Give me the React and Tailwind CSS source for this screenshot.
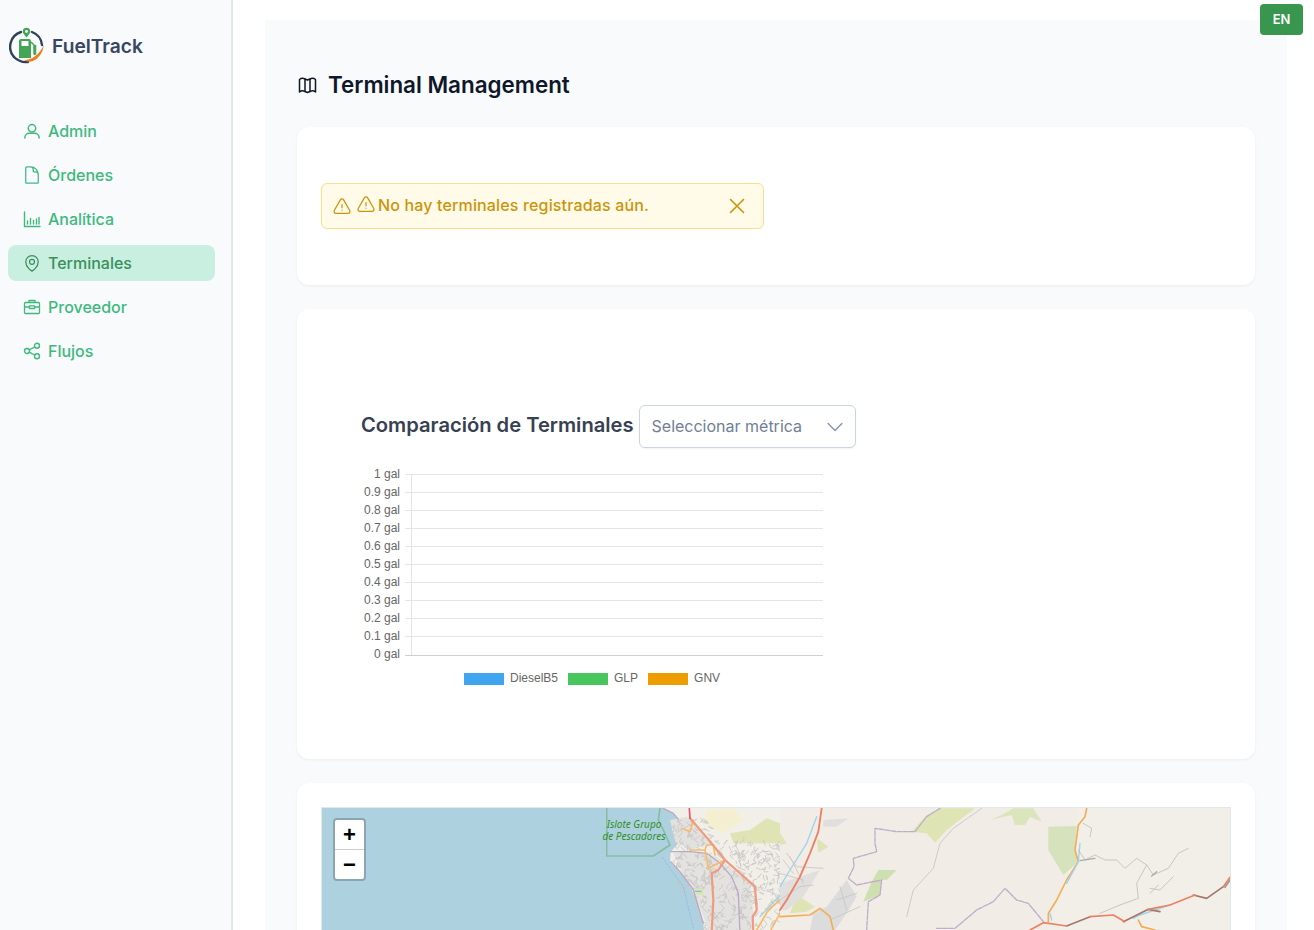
import React from 'react';
import {
  HiOutlineDocument,
  HiOutlineMapPin,
  HiOutlineExclamationTriangle,
  HiOutlineXMark,
  HiOutlineChevronDown,
} from 'react-icons/hi2';

const NAV_ITEMS = [
  { label: 'Admin', icon: UserIcon, size: 'w-[18px] h-[18px]' },
  { label: 'Órdenes', icon: HiOutlineDocument, size: 'w-[20px] h-[20px] -mx-px' },
  { label: 'Analítica', icon: ChartIcon, size: 'w-[18px] h-[18px]' },
  { label: 'Terminales', icon: HiOutlineMapPin, size: 'w-[20px] h-[20px] -mx-px', active: true },
  { label: 'Proveedor', icon: BriefcaseIcon, size: 'w-[18px] h-[18px]' },
  { label: 'Flujos', icon: ShareIcon, size: 'w-[18px] h-[18px]' },
];

const Y_TICKS = ['1', '0.9', '0.8', '0.7', '0.6', '0.5', '0.4', '0.3', '0.2', '0.1', '0'];

const LEGEND = [
  { label: 'DieselB5', color: 'bg-[#3ea5ee]' },
  { label: 'GLP', color: 'bg-[#46c65c]' },
  { label: 'GNV', color: 'bg-[#ee9d00]' },
];

// Zonas urbanas del mapa, en coordenadas del recorte a 3x: x, y, ancho, alto, segmentos.
const URBAN_AREAS = [
  [1060, 60, 110, 90, 50],
  [1060, 160, 120, 110, 70],
  [1130, 230, 170, 170, 110],
  [1190, 130, 190, 100, 90],
  [1300, 240, 80, 160, 50],
  [1380, 180, 70, 200, 80],
  [1480, 320, 100, 80, 40],
];

function urbanWeb() {
  let seed = 17;
  const next = () => {
    seed = (seed * 16807) % 2147483647;
    return seed / 2147483647;
  };
  let d = '';
  URBAN_AREAS.forEach(([x, y, w, h, count]) => {
    for (let i = 0; i < count; i++) {
      const a = x + next() * w;
      const b = y + next() * h;
      d += `M${a.toFixed(0)} ${b.toFixed(0)}l${(next() * 30 - 15).toFixed(0)} ${(next() * 30 - 15).toFixed(0)}l${(next() * 24 - 12).toFixed(0)} ${(next() * 24 - 12).toFixed(0)}`;
    }
  });
  return d;
}

const URBAN_WEB = urbanWeb();

export default function App() {
  return (
    <div className="relative flex h-screen overflow-hidden bg-white font-['Inter',sans-serif]">
      <Sidebar />
      <main className="flex-1 min-w-0 pl-8 pr-[27px] pt-5">
        <div className="bg-[#f8fafc] px-8 pt-[49px] h-[1200px]">
          <h1 className="flex items-center gap-[10px] text-[22.4px] leading-[32px] font-semibold text-[#0f172a]">
            <MapIcon />
            Terminal Management
          </h1>
          <AlertCard />
          <ChartCard />
          <MapCard />
        </div>
      </main>
      <button className="absolute top-[4px] right-[11px] w-[43px] h-[31px] rounded-[4px] bg-[#38964f] text-white text-[13px] font-semibold">
        EN
      </button>
    </div>
  );
}

function Sidebar() {
  return (
    <aside className="w-[233px] shrink-0 bg-[#f9fafc] border-r-2 border-[#e2e8f0]">
      <div className="flex gap-[6px] pl-[9px] pt-[27px] h-[113px] items-start">
        <Logo />
        <span className="mt-[5px] text-[19.2px] leading-[28px] font-semibold text-[#374763]">FuelTrack</span>
      </div>
      <nav className="flex flex-col gap-2 px-2 w-[223px]">
        {NAV_ITEMS.map((item) => (
          <a
            key={item.label}
            href="#"
            className={`flex items-center gap-[7px] h-[36px] pl-[15px] rounded-[8px] text-[16px] font-medium ${
              item.active ? 'bg-[#c9efe0] text-[#3a8f5c]' : 'text-[#3eb97f]'
            }`}
          >
            <item.icon className={`${item.size} shrink-0`} />
            {item.label}
          </a>
        ))}
      </nav>
    </aside>
  );
}

function AlertCard() {
  return (
    <section className="mt-[26px] h-[158px] rounded-[12px] bg-white px-6 pt-[56px] shadow-[0_1px_3px_rgba(0,0,0,0.06)]">
      <div className="flex items-center w-[443px] h-[46px] pl-[10px] pr-[13px] rounded-[6px] border border-[#f8e08a] bg-[#fffbe8] text-[#cc9409]">
        <HiOutlineExclamationTriangle className="w-[20px] h-[20px] mt-[1px] shrink-0" />
        <HiOutlineExclamationTriangle className="w-[20px] h-[20px] ml-[4px] -mt-[3px] shrink-0" />
        <span className="ml-[2px] -mt-[2px] text-[16px] font-medium tracking-[0.15px]">No hay terminales registradas aún.</span>
        <HiOutlineXMark className="ml-auto w-[26px] h-[26px] shrink-0" />
      </div>
    </section>
  );
}

function ChartCard() {
  return (
    <section className="mt-[24px] h-[450px] rounded-[12px] bg-white pl-[64px] pt-[96px] shadow-[0_1px_3px_rgba(0,0,0,0.06)]">
      <div className="flex items-center h-[43px]">
        <h2 className="text-[20.15px] font-semibold text-[#374151] leading-[28px] -mt-[3px]">Comparación de Terminales</h2>
        <div className="ml-[5px] flex items-center justify-between w-[217px] h-[43px] pl-[12px] pr-[9px] rounded-[6px] border border-[#cbd5e0] bg-white shadow-[0_1px_2px_rgba(0,0,0,0.05)] text-[16px] text-[#718096]">
          <span className="-mt-[2px]">Seleccionar métrica</span>
          <HiOutlineChevronDown className="w-[22px] h-[22px] text-[#8795a8]" />
        </div>
      </div>
      <EmptyChart />
    </section>
  );
}

function EmptyChart() {
  return (
    <svg width="480" height="240" viewBox="361 460 480 240" className="block mt-[12px] font-['Liberation_Sans',sans-serif]">
      {Y_TICKS.map((tick, i) => {
        const y = 474.5 + i * 18;
        return (
          <g key={tick}>
            <line x1="405" x2="823" y1={y + (i === 10 ? 1 : 0)} y2={y + (i === 10 ? 1 : 0)} stroke={i === 10 ? '#cfcfcf' : '#e5e5e5'} />
            <text x="400" y={y + 3} textAnchor="end" fontSize="12" fill="#666">
              {tick} gal
            </text>
          </g>
        );
      })}
      <line x1="411.5" x2="411.5" y1="474" y2="655" stroke="#e5e5e5" />
      <foreignObject x="361" y="672" width="480" height="20">
        <div className="flex items-center text-[12px] leading-[16px] text-[#666] pl-[103px]">
          {LEGEND.map((entry) => (
            <span key={entry.label} className="flex items-center gap-[6px] mr-[10px]">
              <span className={`w-[40px] h-[12px] ${entry.color}`} />
              <span className="-mt-[2px]">{entry.label}</span>
            </span>
          ))}
        </div>
      </foreignObject>
    </svg>
  );
}

function MapCard() {
  return (
    <section className="mt-[24px] h-[400px] rounded-[12px] bg-white p-6 shadow-[0_1px_3px_rgba(0,0,0,0.06)]">
      <div className="relative h-[350px] overflow-hidden bg-[#aed1e0] border border-[#e2e8f0]">
        <MapDrawing />
        <div className="absolute left-[11px] top-[10px] w-[33px] rounded-[4px] border-2 border-[#8ba6b2] bg-white overflow-hidden">
          <div className="h-[30px] flex items-center justify-center border-b border-[#ccc] text-[22px] font-bold leading-none text-black font-['Liberation_Sans',sans-serif]">+</div>
          <div className="h-[29px] flex items-center justify-center text-[22px] font-bold leading-none text-black font-['Liberation_Sans',sans-serif]">−</div>
        </div>
      </div>
    </section>
  );
}

// Coordenadas copiadas de los recortes a 3x, por eso los dos grupos escalados.
function MapDrawing() {
  return (
    <svg className="absolute inset-0 block" width="908" height="350" viewBox="322 808 908 350">
      <defs>
        <filter id="tile-blur" x="0" y="0" width="100%" height="100%">
          <feGaussianBlur stdDeviation="0.55" />
        </filter>
      </defs>
      <g filter="url(#tile-blur)">
        <g transform="translate(320 800) scale(0.33333)" fill="none" strokeLinejoin="round" strokeLinecap="round">
          <path fill="#f2efe9" d="M1030 25L1060 40L1075 58L1060 90L1075 130L1052 155L1050 185L1080 215L1120 270L1150 370L1160 480L1400 480L1400 0L1030 0Z" />
          <path fill="#f5efd2" d="M1160 30L1240 25L1270 60L1210 100L1150 70Z" />
          <path fill="#dfe4b4" d="M1230 100L1290 90L1340 55L1380 70L1380 130L1300 130L1240 130Z" />
          <path fill="#e4e2df" d="M1060 160L1110 150L1190 170L1290 250L1300 340L1290 400L1170 400L1130 300L1090 225Z" />
          <path fill="#e2e1df" d="M1050 60L1100 50L1170 130L1110 150L1065 125Z" />
          <path stroke="#c6c6c6" strokeWidth="2.5" d={URBAN_WEB} />
          <path stroke="#88bca0" strokeWidth="5" d="M860 25L860 168L1000 168L1050 135L1030 90L1015 60L1020 25" />
          <path stroke="#7fa9e0" strokeWidth="1.5" strokeDasharray="6 5" d="M1028 172L1050 205L1090 260L1120 385" />
          <path stroke="#b9a9c6" strokeWidth="4" d="M1030 25L1060 40L1075 58M1052 155L1110 155L1160 160L1200 190L1235 230L1255 280L1260 400M1052 185L1080 215L1120 270L1150 370" />
          <path stroke="#f7bb6d" strokeWidth="5" d="M1085 85L1110 95L1120 60M1110 150L1155 150L1160 135L1180 135L1185 165M1155 150L1165 205L1215 180M1380 300L1345 330L1310 390M1380 340L1350 395" />
          <path stroke="#9fd3ea" strokeWidth="4" d="M1380 285L1320 350" />
          <path stroke="#f09a7e" strokeWidth="6.500" d="M1110 55L1175 130L1215 180L1305 260L1310 330L1298 350L1300 400M1215 180L1195 210L1175 220L1180 300L1175 400" />
          <path stroke="#e8546a" strokeWidth="5" d="M1108 25L1110 55" />
          <path fill="#d7e6b5" d="M1125 265L1150 265L1150 285L1130 285Z" />
          <path stroke="#5aa4e6" strokeWidth="2.500" d="M1125 274L1143 274" />
        </g>
        <g transform="translate(780 800) scale(0.33333)" fill="none" strokeLinejoin="round" strokeLinecap="round">
          <path fill="#f1ece6" d="M0 20H900V400H0Z" />
          <path fill="#f2efe9" d="M900 20H1355V400H800L860 240Z" />
          <path fill="#dfe4b4" d="M395 95L440 45L480 25L585 25L500 90L465 128L440 100Z" />
          <path fill="#d5e2bb" d="M805 80L890 78L885 150L895 185L850 225L805 150Z" />
          <path fill="#dbe5bc" d="M630 60L665 45L700 25L760 25L785 65L750 50L735 75L705 75L695 45Z" />
          <path fill="#dfe4b4" d="M0 100L20 130L0 135ZM110 115L145 140L115 158ZM30 340L50 285L105 320L80 335Z" />
          <path fill="#cfe0b0" d="M295 210L350 210L320 240L305 240L300 285L250 305L275 245Z" />
          <path fill="#e0dfdd" d="M0 250L60 230L120 210L70 290L20 330L0 330ZM130 60L205 55L170 80L130 80Z" />
          <path fill="#dcdcdc" d="M100 340L140 320L200 240L230 290L200 340L165 390L90 390Z" />
          <path stroke="#c6c6c6" strokeWidth="2.500" d="M20 160L50 200L130 205M0 300L60 260L100 255M170 300L230 280M150 360L240 320M200 330L180 260M10 180L40 220M0 220L70 240M30 170L70 250" />
          <path stroke="#c4c4c4" strokeWidth="2.500" d="M380 350L400 270L460 205L480 130L520 85L605 25" />
          <path stroke="#bcaec8" strokeWidth="4" strokeDasharray="14 4" d="M480 25L440 50L405 95L350 95L285 85L285 130L290 155L220 175L222 200L205 235L230 255L305 240L300 285L265 305L260 390M470 385L525 385L590 330L640 305L675 265L710 300L745 310L790 365" />
          <path stroke="#f2ae56" strokeWidth="5" d="M920 25L915 50L895 75L885 150L895 185L860 240L830 300L805 340L805 365M0 350L90 345L120 325L150 350L160 390M1075 360L1085 380L1125 390" />
          <path stroke="#9fd3ea" strokeWidth="4" d="M110 50L80 130L30 210L0 260M900 130L895 185L860 250M810 340L815 360M1060 355L1080 345L1170 315" />
          <path stroke="#ee8063" strokeWidth="5.500" d="M125 25L115 95L90 160L60 230L20 300L0 330" />
          <path stroke="#bdbdbd" strokeWidth="2.500" d="M910 70L935 85L930 110M895 150L915 180L945 165L975 180L1010 180L1035 205L1070 175L1100 195L1120 225L1165 205L1195 160L1225 145M1100 195L1070 250L1075 295L1020 315L960 340M1180 230L1140 270L1110 265M1135 255L1110 280" />
          <path stroke="#aaa" strokeWidth="4" d="M900 182L945 175M1115 228L1130 215" />
          <path stroke="#a5776a" strokeWidth="5" d="M860 378L930 350M1030 365L1105 328L1140 335M1240 285L1280 295L1330 260" />
          <path stroke="#ee8063" strokeWidth="5" d="M750 390L790 368L860 378M930 350L1000 345L1035 365M1105 328L1170 315L1245 285M1330 260L1350 232" />
          <path stroke="#999" strokeWidth="5" d="M1335 262L1350 240" />
        </g>
      </g>
      <text x="634" y="828" textAnchor="middle" fontSize="10" fontStyle="italic" fontFamily="'Noto Sans', sans-serif" fill="#2f8f1f">Islote Grupo</text>
      <text x="634" y="840" textAnchor="middle" fontSize="10" fontStyle="italic" fontFamily="'Noto Sans', sans-serif" fill="#2f8f1f">de Pescadores</text>
    </svg>
  );
}

function Logo() {
  return (
    <svg width="37" height="37" viewBox="0 0 37 37" fill="none" aria-hidden="true">
      <path d="M12 5A15.500 15.500 0 0 0 5 30" stroke="#2c4359" strokeWidth="2.400" strokeLinecap="round" />
      <path d="M23 5A15.500 15.500 0 0 1 33 18" stroke="#2c4359" strokeWidth="2.400" strokeLinecap="round" />
      <path d="M5 30Q11 36 19 35" stroke="#2c4359" strokeWidth="2.400" strokeLinecap="round" />
      <path d="M15 33Q27 33 35 18Q33 30 24 34Q19 36 15 33Z" fill="#e8821e" />
      <path d="M17.500 10.500c-2-2.800-3.700-4-3.700-6a3.700 3.700 0 0 1 7.400 0c0 2-1.700 3.200-3.700 6Z" fill="#45a455" />
      <circle cx="17.500" cy="4.500" r="1.400" fill="#fff" />
      <path d="M10 14a2 2 0 0 1 2-2h8a2 2 0 0 1 2 2v17H10Z" fill="#45a455" />
      <rect x="12.500" y="14" width="7" height="5" fill="#fff" />
      <path d="M22 15l3 3v8q0 2.500 1.500 1V18" stroke="#45a455" strokeWidth="1.500" />
    </svg>
  );
}

function MapIcon() {
  return (
    <svg width="21" height="21" viewBox="0 0 21 21" fill="none" stroke="currentColor" strokeWidth="1.500" strokeLinejoin="round" strokeLinecap="round" aria-hidden="true">
      <path d="M2.500 4.500Q5 2.500 8 4L10.500 5L13 4Q16 2.500 18.500 4.500V17Q16 15 13 16.500L10.500 17.500L8 16.500Q5 15 2.500 17Z" />
      <path d="M8 4V16.500M13 4V16.500" />
    </svg>
  );
}

function UserIcon(props) {
  return (
    <svg viewBox="0 0 18 18" fill="none" stroke="currentColor" strokeWidth="1.500" strokeLinecap="round" {...props}>
      <circle cx="9" cy="6.300" r="3.700" />
      <path d="M1.800 16c0-3 2.300-4.800 4.700-4.800h5c2.400 0 4.700 1.800 4.700 4.800" />
    </svg>
  );
}

function ChartIcon(props) {
  return (
    <svg viewBox="0 0 18 18" fill="none" stroke="currentColor" strokeWidth="1.400" strokeLinecap="round" {...props}>
      <path d="M1.500 2V16.500H17" />
      <path d="M4.500 14V11M7.500 14V8.500M10.500 14V10.500M13.500 14V9M16 14V7.500" />
    </svg>
  );
}

function BriefcaseIcon(props) {
  return (
    <svg viewBox="0 0 18 18" fill="none" stroke="currentColor" strokeWidth="1.300" strokeLinejoin="round" {...props}>
      <rect x="1.500" y="4.500" width="15" height="11" rx="1" />
      <path d="M6 4.500V2.500H12V4.500M1.500 9H6.500M11.500 9H16.500M6.500 7.800H11.500V10.500H6.500Z" />
    </svg>
  );
}

function ShareIcon(props) {
  return (
    <svg viewBox="0 0 18 18" fill="none" stroke="currentColor" strokeWidth="1.400" {...props}>
      <circle cx="14" cy="3.800" r="2.500" />
      <circle cx="4" cy="9" r="2.500" />
      <circle cx="14" cy="14.200" r="2.500" />
      <path d="M6.300 7.800L11.700 5M6.300 10.200L11.700 13" />
    </svg>
  );
}
